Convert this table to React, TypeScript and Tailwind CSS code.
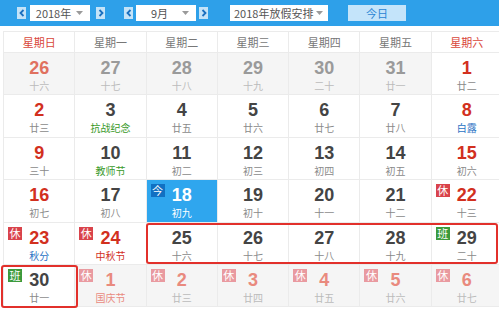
import React from 'react';

type Day = {
  num: number;
  lunar: string;
  kind: 'prev' | 'cur' | 'next';
  red?: boolean;
  badge?: '休' | '班' | '今';
  lunarColor?: 'green' | 'blue' | 'red';
};

const days: Day[] = [
  { num: 26, lunar: '十六', kind: 'prev', red: true },
  { num: 27, lunar: '十七', kind: 'prev' },
  { num: 28, lunar: '十八', kind: 'prev' },
  { num: 29, lunar: '十九', kind: 'prev' },
  { num: 30, lunar: '二十', kind: 'prev' },
  { num: 31, lunar: '廿一', kind: 'prev' },
  { num: 1, lunar: '廿二', kind: 'cur', red: true },
  { num: 2, lunar: '廿三', kind: 'cur', red: true },
  { num: 3, lunar: '抗战纪念', kind: 'cur', lunarColor: 'green' },
  { num: 4, lunar: '廿五', kind: 'cur' },
  { num: 5, lunar: '廿六', kind: 'cur' },
  { num: 6, lunar: '廿七', kind: 'cur' },
  { num: 7, lunar: '廿八', kind: 'cur' },
  { num: 8, lunar: '白露', kind: 'cur', red: true, lunarColor: 'blue' },
  { num: 9, lunar: '三十', kind: 'cur', red: true },
  { num: 10, lunar: '教师节', kind: 'cur', lunarColor: 'green' },
  { num: 11, lunar: '初二', kind: 'cur' },
  { num: 12, lunar: '初三', kind: 'cur' },
  { num: 13, lunar: '初四', kind: 'cur' },
  { num: 14, lunar: '初五', kind: 'cur' },
  { num: 15, lunar: '初六', kind: 'cur', red: true },
  { num: 16, lunar: '初七', kind: 'cur', red: true },
  { num: 17, lunar: '初八', kind: 'cur' },
  { num: 18, lunar: '初九', kind: 'cur', badge: '今' },
  { num: 19, lunar: '初十', kind: 'cur' },
  { num: 20, lunar: '十一', kind: 'cur' },
  { num: 21, lunar: '十二', kind: 'cur' },
  { num: 22, lunar: '十三', kind: 'cur', red: true, badge: '休' },
  { num: 23, lunar: '秋分', kind: 'cur', red: true, badge: '休', lunarColor: 'blue' },
  { num: 24, lunar: '中秋节', kind: 'cur', red: true, badge: '休', lunarColor: 'red' },
  { num: 25, lunar: '十六', kind: 'cur' },
  { num: 26, lunar: '十七', kind: 'cur' },
  { num: 27, lunar: '十八', kind: 'cur' },
  { num: 28, lunar: '十九', kind: 'cur' },
  { num: 29, lunar: '二十', kind: 'cur', badge: '班' },
  { num: 30, lunar: '廿一', kind: 'cur', badge: '班' },
  { num: 1, lunar: '国庆节', kind: 'next', red: true, badge: '休', lunarColor: 'red' },
  { num: 2, lunar: '廿三', kind: 'next', red: true, badge: '休' },
  { num: 3, lunar: '廿四', kind: 'next', red: true, badge: '休' },
  { num: 4, lunar: '廿五', kind: 'next', red: true, badge: '休' },
  { num: 5, lunar: '廿六', kind: 'next', red: true, badge: '休' },
  { num: 6, lunar: '廿七', kind: 'next', red: true, badge: '休' },
];

const weekdays = ['星期日', '星期一', '星期二', '星期三', '星期四', '星期五', '星期六'];

const Arrow = ({ dir }: { dir: 'left' | 'right' }) => (
  <div className="w-[9px] h-[12px] bg-[#c4e3f8] flex items-center justify-center">
    <svg width="6" height="8" viewBox="0 0 6 8">
      <path
        d={dir === 'left' ? 'M4.5 1 L1.5 4 L4.5 7' : 'M1.5 1 L4.5 4 L1.5 7'}
        fill="none"
        stroke="#1a6fbf"
        strokeWidth="1.8"
      />
    </svg>
  </div>
);

const Select = ({ label, width }: { label: string; width: string }) => (
  <div
    className={`${width} h-[16px] bg-white flex items-center justify-between pl-[4px] pr-[7px] text-[11px] leading-[16px] text-[#555] whitespace-nowrap`}
  >
    <span className="flex-1 text-center">{label}</span>
    <svg width="7" height="4" viewBox="0 0 7 4" className="ml-[3px] shrink-0">
      <path d="M0 0 L7 0 L3.5 4 Z" fill="#9a9a9a" />
    </svg>
  </div>
);

const DayCell = ({ d }: { d: Day }) => {
  const isToday = d.badge === '今';
  let bg = 'bg-white';
  if (d.kind !== 'cur') bg = 'bg-[#f5f5f5]';
  if (isToday) bg = 'bg-[#2fa6ee]';

  let numColor = 'text-[#444]';
  if (d.kind === 'prev') numColor = d.red ? 'text-[#e0715f]' : 'text-[#9a9a9a]';
  else if (d.kind === 'next') numColor = 'text-[#e98a7e]';
  else if (d.red) numColor = 'text-[#d2301e]';
  if (isToday) numColor = 'text-white';

  let lunarColor = d.kind === 'cur' ? 'text-[#8a8a8a]' : 'text-[#bbb]';
  if (d.lunarColor === 'green') lunarColor = 'text-[#3a9a2a]';
  if (d.lunarColor === 'blue') lunarColor = 'text-[#2a72c4]';
  if (d.lunarColor === 'red') lunarColor = d.kind === 'next' ? 'text-[#e98a7e]' : 'text-[#d2301e]';
  if (isToday) lunarColor = 'text-white';

  let badgeBg = 'bg-[#d9434b]';
  if (d.badge === '班') badgeBg = 'bg-[#3c9a3c]';
  if (d.badge === '今') badgeBg = 'bg-[#1170c2]';
  if (d.kind === 'next') badgeBg = 'bg-[#e99aa0]';

  return (
    <div className={`relative h-[42.4px] border-r border-b border-[#ebebeb] ${bg} flex flex-col items-center pt-[5px]`}>
      {d.badge && (
        <div
          className={`absolute left-[4px] top-[4px] w-[14px] h-[13px] ${badgeBg} text-white text-[11px] leading-[13px] text-center`}
        >
          {d.badge}
        </div>
      )}
      <div className={`text-[18px] leading-[20px] font-bold font-['Liberation_Sans',Arial,sans-serif] ${numColor}`}>
        {d.num}
      </div>
      <div className={`text-[10px] leading-[14px] mt-[1px] ${lunarColor}`}>{d.lunar}</div>
    </div>
  );
};

export default function App() {
  return (
    <div className="relative w-[499px] h-[310px] bg-white overflow-hidden font-['Noto_Sans_CJK_SC',sans-serif]">
      {/* top toolbar */}
      <div className="h-[26px] bg-[#2ea0e9] flex items-center">
        <div className="ml-[17px]">
          <Arrow dir="left" />
        </div>
        <div className="ml-[4px]">
          <Select label="2018年" width="w-[60px]" />
        </div>
        <div className="ml-[6px]">
          <Arrow dir="right" />
        </div>
        <div className="ml-[19px]">
          <Arrow dir="left" />
        </div>
        <div className="ml-[3px]">
          <Select label="9月" width="w-[60px]" />
        </div>
        <div className="ml-[3px]">
          <Arrow dir="right" />
        </div>
        <div className="ml-[22px]">
          <Select label="2018年放假安排" width="w-[98px]" />
        </div>
        <div className="ml-[20px] w-[58px] h-[16px] bg-[#c4e4fa] text-[#2a85d4] text-[11px] leading-[16px] text-center">
          今日
        </div>
      </div>

      {/* calendar grid */}
      <div className="mt-[5px] ml-[3px] w-[500px] border-l border-[#ebebeb]">
        <div className="grid grid-cols-7 h-[22px] border-t border-b border-[#ebebeb]">
          {weekdays.map((w, i) => (
            <div
              key={w}
              className={`border-r border-[#ebebeb] flex items-center justify-center text-[11px] ${
                i === 0 || i === 6 ? 'text-[#d9463a]' : 'text-[#777]'
              }`}
            >
              {w}
            </div>
          ))}
        </div>
        <div className="grid grid-cols-7">
          {days.map((d, i) => (
            <DayCell key={i} d={d} />
          ))}
        </div>
      </div>

      {/* highlight boxes */}
      <div className="absolute left-[146px] top-[223px] w-[352px] h-[41px] border-2 border-[#e2302b] rounded-[3px]" />
      <div className="absolute left-[1px] top-[265px] w-[77px] h-[43px] border-2 border-[#e2302b] rounded-[3px]" />
    </div>
  );
}
